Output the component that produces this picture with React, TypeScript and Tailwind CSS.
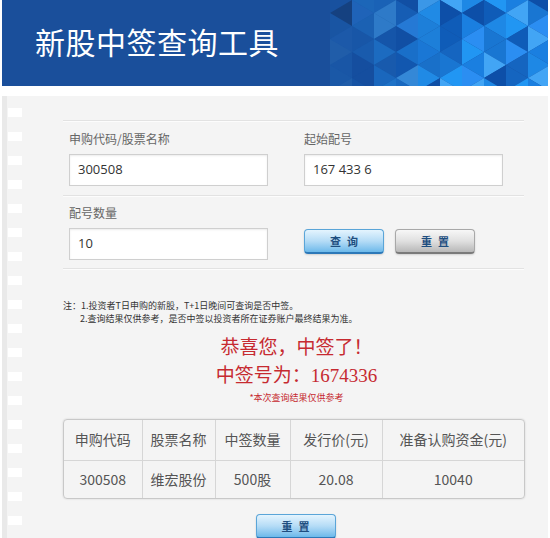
import React from 'react';

const palette = ['#1976d2', '#1e88e5', '#2196f3', '#1565c0', '#0f5cb8', '#42a5f5', '#1a7fe0', '#2b8ef2', '#0d4fa8'];

const TrianglePattern: React.FC = () => {
  const W = 22;
  const H = 26;
  const tris: { pts: string; fill: string; op: number }[] = [];
  for (let c = 0; c < 12; c++) {
    const x0 = c * W;
    const off = (c % 2) * (H / 2);
    const op = Math.min(1, c / 6);
    for (let r = -1; r < 5; r++) {
      const y = r * H + off;
      tris.push({
        pts: `${x0},${y} ${x0},${y + H} ${x0 + W},${y + H / 2}`,
        fill: palette[(c * 7 + r * 5 + 11) % palette.length],
        op,
      });
      tris.push({
        pts: `${x0 + W},${y + H / 2} ${x0 + W},${y + H * 1.5} ${x0},${y + H}`,
        fill: palette[(c * 3 + r * 8 + 4) % palette.length],
        op,
      });
    }
  }
  return (
    <svg width="240" height="86" viewBox="0 0 240 86" className="shrink-0">
      {tris.map((t, i) => (
        <polygon key={i} points={t.pts} fill={t.fill} opacity={t.op} />
      ))}
    </svg>
  );
};

const Field: React.FC<{ label: string; value: string }> = ({ label, value }) => (
  <div className="flex flex-col">
    <span className="text-[12px] leading-[16px] text-[#666]">{label}</span>
    <div className="mt-[7px] h-[32px] w-[199px] border border-[#cfcfcf] bg-white px-[8px] flex items-center shadow-[inset_0_1px_2px_rgba(0,0,0,0.08)]">
      <span className="text-[13px] text-[#333] font-['Open_Sans','Noto_Sans_CJK_SC',sans-serif]">{value}</span>
    </div>
  </div>
);

const Divider: React.FC = () => <div className="h-[2px] border-t border-[#e2e2e2] bg-white/70" />;

const BlueButton: React.FC<{ text: string }> = ({ text }) => (
  <button className="h-[25px] w-[80px] rounded-[4px] border border-[#5aa5d8] border-b-2 border-b-[#2c78b8] bg-linear-to-b from-[#e4f4fe] via-[#b5dcf6] to-[#6cb9ea] text-[11px] font-bold tracking-[6px] pl-[6px] text-[#1e4e80] shadow-[0_1px_2px_rgba(0,0,0,0.15)]">
    {text}
  </button>
);

const GrayButton: React.FC<{ text: string }> = ({ text }) => (
  <button className="h-[25px] w-[80px] rounded-[4px] border border-[#a8a8a8] border-b-2 border-b-[#7a7a7a] bg-linear-to-b from-[#f7f7f7] via-[#e0e0e0] to-[#b8b8b8] text-[11px] font-bold tracking-[6px] pl-[6px] text-[#1e4e80] shadow-[0_1px_2px_rgba(0,0,0,0.15)]">
    {text}
  </button>
);

const holes = Array.from({ length: 18 });

const App: React.FC = () => {
  return (
    <div className="w-[550px] h-[538px] overflow-hidden bg-white px-[2px] font-['Noto_Sans_CJK_SC',sans-serif]">
      {/* Header */}
      <div className="h-[86px] bg-[#1a4f9b] flex items-center justify-between">
        <h1 className="pl-[33px] text-[30px] leading-none text-white tracking-[0.5px] pb-[4px]">新股中签查询工具</h1>
        <TrianglePattern />
      </div>

      {/* Panel */}
      <div className="mt-[10px] h-[460px] bg-[#f4f4f4] flex">
        <div className="w-[5px] bg-[#e9e9e9]" />
        <div className="w-[15px] flex flex-col gap-[15px] pt-[12px] pl-[1px]">
          {holes.map((_, i) => (
            <div key={i} className="h-[9px] w-[14px] bg-white" />
          ))}
        </div>

        <div className="ml-[41px] w-[461px] flex flex-col pt-[24px]">
          <Divider />
          <div className="pl-[6px] pt-[9px] grid grid-cols-[199px_199px] gap-x-[36px]">
            <Field label="申购代码/股票名称" value="300508" />
            <Field label="起始配号" value="167 433 6" />
          </div>
          <div className="mt-[9px]">
            <Divider />
          </div>
          <div className="pl-[6px] pt-[8px] grid grid-cols-[199px_199px] gap-x-[36px] items-end">
            <Field label="配号数量" value="10" />
            <div className="flex gap-[11px] pb-[6px]">
              <BlueButton text="查询" />
              <GrayButton text="重置" />
            </div>
          </div>
          <div className="mt-[8px]">
            <Divider />
          </div>

          {/* Notes */}
          <div className="mt-[29px] text-[9px] leading-[13px] text-[#333]">
            <p>注：1.投资者T日申购的新股，T+1日晚间可查询是否中签。</p>
            <p className="pl-[17px]">2.查询结果仅供参考，是否中签以投资者所在证券账户最终结果为准。</p>
          </div>

          {/* Result */}
          <div className="mt-[9px] flex flex-col items-center text-[#c62a30] pl-[6px]">
            <p className="text-[19px] leading-[28px] font-normal font-['Liberation_Serif','Noto_Sans_CJK_SC',serif]">恭喜您，中签了！</p>
            <p className="text-[19px] leading-[28px] font-normal font-['Liberation_Serif','Noto_Sans_CJK_SC',serif]">中签号为：1674336</p>
            <p className="mt-[2px] text-[9px] leading-[12px]">*本次查询结果仅供参考</p>
          </div>

          {/* Table */}
          <div className="mt-[15px] w-[462px] rounded-[4px] border border-[#c8c8c8] shadow-[0_0_2px_rgba(0,0,0,0.15)] overflow-hidden">
            <table className="w-full border-collapse text-[14px] text-[#555] text-center">
              <colgroup>
                <col className="w-[78px]" />
                <col className="w-[73px]" />
                <col className="w-[75px]" />
                <col className="w-[92px]" />
                <col />
              </colgroup>
              <tbody>
                <tr className="h-[40px]">
                  <td className="border-r border-b border-[#d6d6d6]">申购代码</td>
                  <td className="border-r border-b border-[#d6d6d6]">股票名称</td>
                  <td className="border-r border-b border-[#d6d6d6]">中签数量</td>
                  <td className="border-r border-b border-[#d6d6d6]">发行价(元)</td>
                  <td className="border-b border-[#d6d6d6]">准备认购资金(元)</td>
                </tr>
                <tr className="h-[38px]">
                  <td className="border-r border-[#d6d6d6]">300508</td>
                  <td className="border-r border-[#d6d6d6]">维宏股份</td>
                  <td className="border-r border-[#d6d6d6]">500股</td>
                  <td className="border-r border-[#d6d6d6]">20.08</td>
                  <td>10040</td>
                </tr>
              </tbody>
            </table>
          </div>

          <div className="mt-[15px] flex justify-center pl-[4px]">
            <BlueButton text="重置" />
          </div>
        </div>
      </div>
    </div>
  );
};

export default App;
